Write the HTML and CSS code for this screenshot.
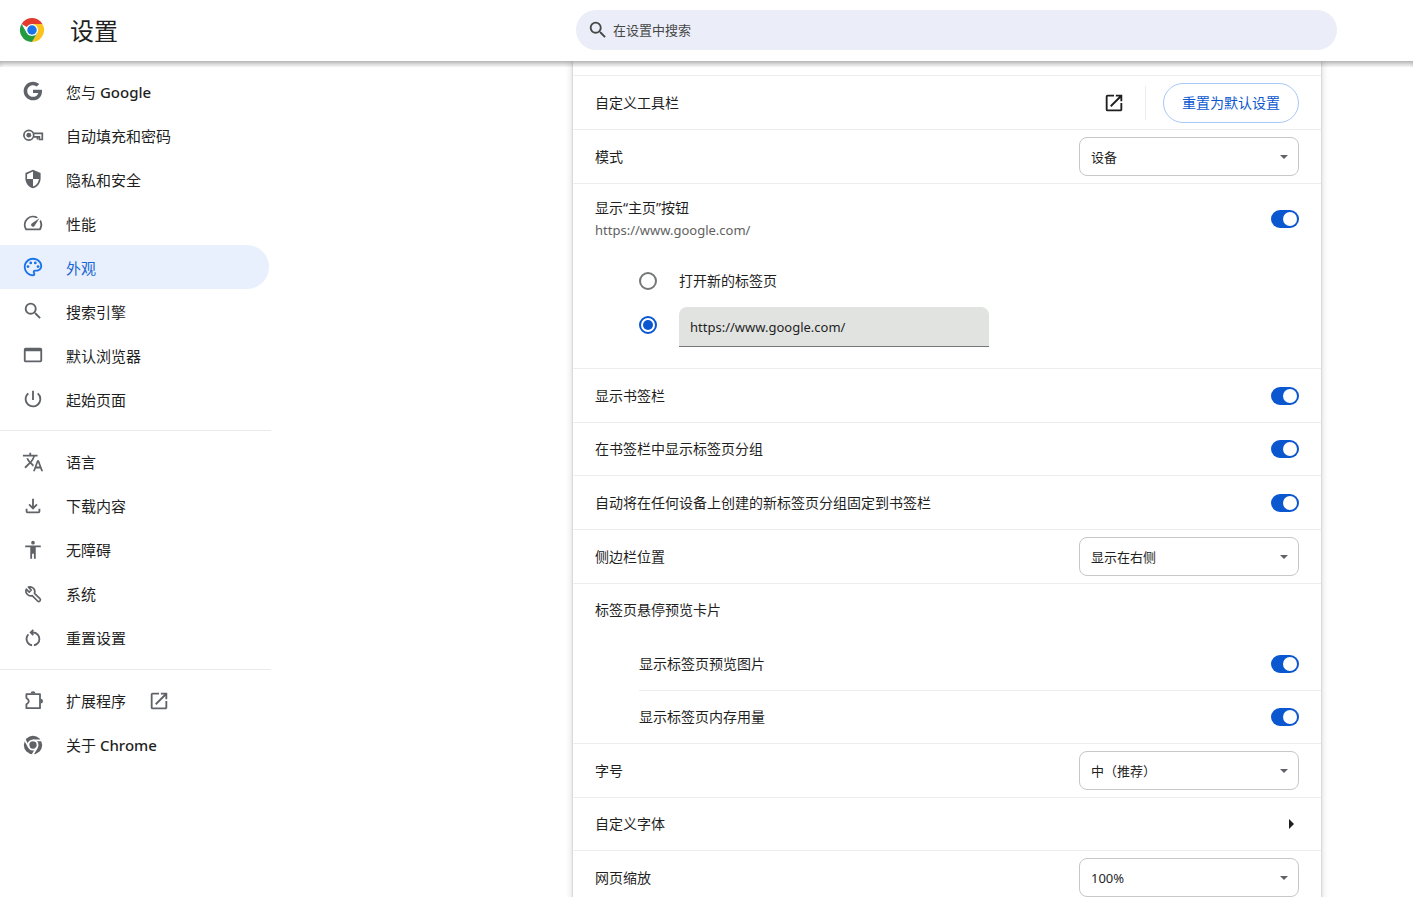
FILE: index.html
```html
<!DOCTYPE html>
<html lang="zh-CN">
<head>
<meta charset="utf-8">
<title>设置</title>
<link rel="stylesheet" href="styles.css">
</head>
<body>
<header class="toolbar">
  <div class="brand">
    <svg class="brand-logo" viewBox="0 0 48 48" aria-hidden="true">
      <path fill="#e33b2e" d="M24 24 3.2 12A24 24 0 0 1 44.8 12H24z"/>
      <path fill="#fcc31e" d="M44.8 12A24 24 0 0 1 24 48L34.4 30 24 12z"/>
      <path fill="#249a41" d="M3.2 12A24 24 0 0 0 24 48L34.4 30H24L13.6 30z"/>
      <circle cx="24" cy="24" r="12" fill="#fff"/>
      <circle cx="24" cy="24" r="9.5" fill="#1a73e8"/>
    </svg>
    <h1 class="brand-title">设置</h1>
  </div>
  <label class="search">
    <svg class="search-icon" viewBox="0 0 24 24" aria-hidden="true"><path d="M15.5 14h-.79l-.28-.27A6.47 6.47 0 0 0 16 9.5 6.5 6.5 0 1 0 9.5 16c1.61 0 3.09-.59 4.23-1.57l.27.28v.79l5 4.99L20.49 19l-4.99-5zm-6 0a4.5 4.5 0 1 1 0-9 4.5 4.5 0 0 1 0 9z"/></svg>
    <input class="search-input" type="search" placeholder="在设置中搜索" aria-label="在设置中搜索">
  </label>
</header>

<div class="page">
  <nav class="sidebar">
    <a class="nav-item" href="#people"><svg class="icon" viewBox="-.4 -.4 18.8 18.8"><path d="M16.58 8H9v2.75h4.47c-.24 1.2-1.42 3.27-4.47 3.27-2.72 0-4.93-2.25-4.93-5.02S6.28 3.98 9 3.98c1.54 0 2.57.66 3.17 1.22l2.19-2.12C12.97 1.79 11.16 1 9 1 4.58 1 1 4.58 1 9s3.58 8 8 8c4.62 0 7.68-3.25 7.68-7.82 0-.46-.04-.83-.1-1.18z"/></svg><span class="nav-text">您与 <span class="latin">Google</span></span></a>
    <a class="nav-item" href="#autofill"><svg class="icon" viewBox="0 0 22 22"><g fill="none" stroke="currentColor" stroke-width="1.7"><circle cx="6.8" cy="11.2" r="4.9"/><path d="M11.4 9.3h8.9v6.2h-2.9v-2.6h-6"/></g><circle cx="6.8" cy="11.2" r="2.4"/><path d="M14.6 12.5h1.6v3h-1.6z"/></svg><span class="nav-text">自动填充和密码</span></a>
    <a class="nav-item" href="#privacy"><svg class="icon" viewBox="-1 -1 26 26"><path d="M12 1L3 5v6c0 5.55 3.84 10.74 9 12 5.16-1.26 9-6.45 9-12V5l-9-4zm0 10.99h7c-.53 4.12-3.28 7.79-7 8.94V12H5V6.3l7-3.11v8.8z"/></svg><span class="nav-text">隐私和安全</span></a>
    <a class="nav-item" href="#performance"><svg class="icon" viewBox="0 0 24 24"><path d="m20.38 8.57-1.23 1.85a8 8 0 0 1-.22 7.58H5.07A8 8 0 0 1 15.58 6.85l1.85-1.23A10 10 0 0 0 3.35 19a2 2 0 0 0 1.72 1h13.85a2 2 0 0 0 1.74-1 10 10 0 0 0-.27-10.44zm-9.79 6.84a2 2 0 0 0 2.83 0l5.66-8.49-8.49 5.66a2 2 0 0 0 0 2.83z"/></svg><span class="nav-text">性能</span></a>
    <a class="nav-item nav-item-active" href="#appearance" aria-current="page"><svg class="icon" viewBox="0 0 24 24"><path d="M12 22C6.49 22 2 17.51 2 12S6.49 2 12 2s10 4.04 10 9c0 3.31-2.69 6-6 6h-1.77c-.28 0-.5.22-.5.5 0 .12.05.23.13.33.41.47.64 1.06.64 1.67A2.5 2.5 0 0 1 12 22zm0-18c-4.41 0-8 3.59-8 8s3.59 8 8 8c.28 0 .5-.22.5-.5a.54.54 0 0 0-.14-.35c-.41-.46-.63-1.05-.63-1.65a2.5 2.5 0 0 1 2.5-2.5H16c2.21 0 4-1.79 4-4 0-3.86-3.59-7-8-7z"/><circle cx="6.5" cy="11.5" r="1.5"/><circle cx="9.5" cy="7.5" r="1.5"/><circle cx="14.5" cy="7.5" r="1.5"/><circle cx="17.5" cy="11.5" r="1.5"/></svg><span class="nav-text">外观</span></a>
    <a class="nav-item" href="#search"><svg class="icon" viewBox="0 0 24 24"><path d="M15.5 14h-.79l-.28-.27A6.47 6.47 0 0 0 16 9.5 6.5 6.5 0 1 0 9.5 16c1.61 0 3.09-.59 4.23-1.57l.27.28v.79l5 4.99L20.49 19l-4.99-5zm-6 0a4.5 4.5 0 1 1 0-9 4.5 4.5 0 0 1 0 9z"/></svg><span class="nav-text">搜索引擎</span></a>
    <a class="nav-item" href="#browser"><svg class="icon" viewBox="0 0 24 24"><path d="M20 4H4a2 2 0 0 0-2 2v12c0 1.1.9 2 2 2h16a2 2 0 0 0 2-2V6a2 2 0 0 0-2-2zm0 14H4V8h16v10z"/></svg><span class="nav-text">默认浏览器</span></a>
    <a class="nav-item" href="#startup"><svg class="icon" viewBox="0 0 24 24"><path d="M13 3h-2v10h2V3zm4.83 2.17-1.42 1.42A6.92 6.92 0 0 1 19 12a7 7 0 1 1-11.42-5.42L6.17 5.17A9 9 0 1 0 21 12a8.94 8.94 0 0 0-3.17-6.83z"/></svg><span class="nav-text">起始页面</span></a>
    <hr class="nav-rule">
    <a class="nav-item" href="#languages"><svg class="icon" viewBox="0 0 24 24"><path d="m12.87 15.07-2.54-2.51.03-.03A17.52 17.52 0 0 0 14.07 6H17V4h-7V2H8v2H1v1.99h11.17C11.5 7.92 10.44 9.75 9 11.35 8.07 10.32 7.3 9.19 6.69 8h-2c.73 1.63 1.73 3.17 2.98 4.56l-5.09 5.02L4 19l5-5 3.11 3.11.76-2.04zM18.5 10h-2L12 22h2l1.12-3h4.75L21 22h2l-4.5-12zm-2.62 7 1.62-4.33L19.12 17h-3.24z"/></svg><span class="nav-label">语言</span></a>
    <a class="nav-item" href="#downloads"><svg class="icon" viewBox="0 0 24 24"><path d="m12 16-5-5 1.4-1.45 2.6 2.6V4h2v8.15l2.6-2.6L17 11zm-6 4a2 2 0 0 1-2-2v-3h2v3h12v-3h2v3a2 2 0 0 1-2 2z"/></svg><span class="nav-label">下载内容</span></a>
    <a class="nav-item" href="#accessibility"><svg class="icon" viewBox="0 0 24 24"><path d="M12 2a2 2 0 1 1 0 4 2 2 0 0 1 0-4zm8.500 7H15v12.500h-2V16h-2v5.500H9V9H3.500V7h17v2z"/></svg><span class="nav-label">无障碍</span></a>
    <a class="nav-item" href="#system"><svg class="icon" viewBox="0 0 22 22"><path fill="none" stroke="currentColor" stroke-width="1.700" stroke-linejoin="round" d="M4.300 6.200 7.200 9.100 9.300 7 6.400 4.100A4.800 4.800 0 0 1 12.500 10.300L17.900 15.700A1.600 1.600 0 0 1 15.600 18L10.200 12.600A4.800 4.800 0 0 1 4.300 6.200Z"/></svg><span class="nav-label">系统</span></a>
    <a class="nav-item" href="#reset"><svg class="icon" viewBox="0 0 24 24"><path d="M6 13c0-1.65.67-3.15 1.76-4.24L6.34 7.34A8 8 0 0 0 11 20.93v-2.02c-2.83-.48-5-2.94-5-5.91zm14 0a8 8 0 0 0-8-8h-.06l1.09-1.09L11.62 2.5 8.12 6l3.5 3.5 1.41-1.41L11.94 7H12a6 6 0 0 1 1 11.91v2.02A8 8 0 0 0 20 13z"/></svg><span class="nav-label">重置设置</span></a>
    <hr class="nav-rule">
    <a class="nav-item" href="#extensions"><svg class="icon" viewBox="0 0 22 22"><path fill="none" stroke="currentColor" stroke-width="1.800" stroke-linejoin="round" d="M4.400 4.200H18V18.200H4.400V14.400Q6.800 13 6.800 11.200T4.400 8Z"/><path d="M8.600 3.600a2.400 2.400 0 0 1 4.800 0zM18.600 8.800a2.400 2.400 0 0 1 0 4.800z"/></svg><span class="nav-label">扩展程序</span><svg class="icon" viewBox="0 0 24 24"><path d="M19 19H5V5h7V3H5a2 2 0 0 0-2 2v14a2 2 0 0 0 2 2h14c1.1 0 2-.9 2-2v-7h-2v7zM14 3v2h3.59l-9.83 9.83 1.41 1.41L19 6.41V10h2V3h-7z"/></svg></a>
    <a class="nav-item" href="#about"><svg class="icon" viewBox="0 0 24 24"><circle cx="12" cy="12" r="10"/><g fill="none" stroke="#fff" stroke-width="2"><circle cx="12" cy="12" r="5"/><path d="M12 7h10M7.700 14.500l-5-8.660M16.300 14.500l-5 8.660"/></g></svg><span class="nav-label">关于 <span class="latin">Chrome</span></span></a>
  </nav>

  <main class="card">
    <section class="row">
      <span class="row-label">自定义工具栏</span>
      <div class="actions">
        <button class="icon-button" type="button" aria-label="自定义工具栏"><svg class="icon-dark" viewBox="0 0 24 24"><path d="M19 19H5V5h7V3H5a2 2 0 0 0-2 2v14a2 2 0 0 0 2 2h14c1.1 0 2-.9 2-2v-7h-2v7zM14 3v2h3.59l-9.83 9.83 1.41 1.41L19 6.41V10h2V3h-7z"/></svg></button>
        <button class="reset-button" type="button">重置为默认设置</button>
      </div>
    </section>
    <section class="row">
      <label class="row-label" for="mode">模式</label>
      <span class="select-wrap"><select class="select" id="mode"><option>设备</option></select></span>
    </section>
    <section class="row row-tall">
      <label class="row-label" for="home">显示“主页”按钮<span class="row-sub">https://www.google.com/</span></label>
      <input class="toggle" id="home" type="checkbox" role="switch" checked>
    </section>
    <div class="radio-group">
      <label class="radio-row"><input class="radio" type="radio" name="home-page">打开新的标签页</label>
      <div class="radio-row">
        <input class="radio" type="radio" name="home-page" aria-label="https://www.google.com/" checked>
        <input class="url-input" type="text" value="https://www.google.com/" aria-label="主页网址">
      </div>
    </div>
    <section class="row">
      <label class="row-label" for="bookmarks">显示书签栏</label>
      <input class="toggle" id="bookmarks" type="checkbox" role="switch" checked>
    </section>
    <section class="row row-compact">
      <label class="row-label" for="groups">在书签栏中显示标签页分组</label>
      <input class="toggle" id="groups" type="checkbox" role="switch" checked>
    </section>
    <section class="row">
      <label class="row-label" for="pin">自动将在任何设备上创建的新标签页分组固定到书签栏</label>
      <input class="toggle" id="pin" type="checkbox" role="switch" checked>
    </section>
    <section class="row">
      <label class="row-label" for="side">侧边栏位置</label>
      <span class="select-wrap"><select class="select" id="side"><option>显示在右侧</option></select></span>
    </section>
    <section class="row row-compact">
      <span class="row-label">标签页悬停预览卡片</span>
    </section>
    <div class="sub-rows">
      <section class="row">
        <label class="row-label" for="preview">显示标签页预览图片</label>
        <input class="toggle" id="preview" type="checkbox" role="switch" checked>
      </section>
      <section class="row row-compact">
        <label class="row-label" for="memory">显示标签页内存用量</label>
        <input class="toggle" id="memory" type="checkbox" role="switch" checked>
      </section>
    </div>
    <section class="row">
      <label class="row-label" for="size">字号</label>
      <span class="select-wrap"><select class="select" id="size"><option>中（推荐）</option></select></span>
    </section>
    <section class="row row-compact">
      <span class="row-label">自定义字体</span>
      <button class="arrow-button" type="button" aria-label="自定义字体"></button>
    </section>
    <section class="row">
      <label class="row-label" for="zoom">网页缩放</label>
      <span class="select-wrap"><select class="select" id="zoom"><option>100%</option></select></span>
    </section>
  </main>
</div>
</body>
</html>
```
FILE: styles.css
```css
* {
  box-sizing: border-box;
}

body {
  margin: 0;
  height: 100vh;
  display: flex;
  flex-direction: column;
  overflow: hidden;
  background: #fff;
  color: #1f1f1f;
  font: 14px/20px "Noto Sans", "Noto Sans CJK SC", sans-serif;
}

button,
input,
select {
  margin: 0;
  font: inherit;
  color: inherit;
}

/* Toolbar */
.toolbar {
  position: relative;
  z-index: 1;
  flex: none;
  display: grid;
  grid-template-columns: minmax(200px, 576fr) minmax(0, 761px) 76fr;
  align-items: center;
  padding: 10px 0 11px;
  background: #fff;
}

.toolbar::after {
  content: "";
  position: absolute;
  top: 100%;
  left: 0;
  right: 0;
  height: 6px;
  box-shadow: inset 0 5px 6px -3px rgba(0, 0, 0, 0.4);
  pointer-events: none;
}

.brand {
  display: flex;
  align-items: center;
  gap: 26px;
  padding-left: 20px;
}

.brand-logo {
  width: 24px;
  height: 24px;
}

.brand-title {
  margin: 0;
  padding-top: 2px;
  font-size: 24px;
  line-height: 32px;
  font-weight: 400;
}

.search {
  display: flex;
  align-items: center;
  gap: 4px;
  height: 40px;
  padding: 0 11px;
  border-radius: 20px;
  background: #ebeef8;
}

.search-icon {
  flex: none;
  width: 22px;
  height: 22px;
  fill: #474747;
}

.search-input {
  flex: 1;
  min-width: 0;
  padding: 0;
  border: 0;
  outline: 0;
  background: none;
  font-size: 13px;
}

.search-input::placeholder {
  color: #474747;
  opacity: 1;
}

/* Page columns */
.page {
  flex: 1;
  min-height: 0;
  overflow: hidden;
  display: grid;
  grid-template-columns: minmax(293px, 573fr) minmax(0, 748px) 92fr;
}

/* Sidebar */
.sidebar {
  width: 271px;
  padding-top: 8px;
}

.nav-item {
  display: flex;
  align-items: center;
  gap: 22px;
  height: 44px;
  margin-right: 2px;
  padding-left: 22px;
  border-radius: 0 22px 22px 0;
  color: #1f1f1f;
  font-size: 15px;
  text-decoration: none;
}

.nav-text {
  padding-top: 1px;
}

.latin {
  font-weight: 500;
}

.nav-item-active {
  background: #e8f0fe;
  color: #1967d2;
}

.nav-rule {
  margin: 9px 0;
  border: 0;
  border-top: 1px solid #e8eaed;
}

.icon {
  flex: none;
  width: 22px;
  height: 22px;
  color: #5f6368;
  fill: currentColor;
}

.nav-item-active .icon {
  color: #1a73e8;
}

/* Settings card */
.card {
  align-self: start;
  padding: 14px 0 22px;
  background: #fff;
  box-shadow: 0 1px 2px 0 rgba(60, 64, 67, 0.3), 0 2px 6px 2px rgba(60, 64, 67, 0.15);
}

.row {
  display: flex;
  align-items: center;
  gap: 16px;
  min-height: 54px;
  padding: 0 22px;
  border-top: 1px solid #ededed;
}

.row-compact {
  min-height: 53px;
}

.row-tall {
  min-height: 70px;
}

.row-label {
  flex: 1;
}

.row-sub {
  display: block;
  margin-top: 2px;
  color: #5f5f5f;
  font-size: 13px;
}

.sub-rows {
  padding-left: 66px;
}

.sub-rows .row {
  padding-left: 0;
}

.sub-rows .row:first-child {
  border-top-color: transparent;
}

.actions {
  display: flex;
  align-items: center;
}

.icon-button {
  display: flex;
  padding: 6px 20px;
  border: 0;
  border-right: 1px solid #ededed;
  background: none;
}

.icon-dark {
  width: 22px;
  height: 22px;
  fill: #1f1f1f;
}

.reset-button {
  height: 40px;
  margin-left: 17px;
  padding: 0 18px;
  border: 1px solid #a8c7fa;
  border-radius: 20px;
  background: #fff;
  color: #0b57d0;
}

.select-wrap {
  position: relative;
  display: flex;
  width: 220px;
}

.select-wrap::after {
  content: "";
  position: absolute;
  top: 18px;
  right: 11px;
  border: 4px solid transparent;
  border-top-color: #5f6368;
  border-bottom: 0;
  pointer-events: none;
}

.select {
  width: 100%;
  height: 39px;
  padding: 0 28px 0 11px;
  appearance: none;
  border: 1px solid #c7c7c7;
  border-radius: 8px;
  background: #fff;
  font-size: 13px;
}

.toggle {
  appearance: none;
  width: 28px;
  height: 18px;
  border-radius: 9px;
  background: #c7c7c7;
}

.toggle::before {
  content: "";
  display: block;
  width: 14px;
  height: 14px;
  margin: 2px;
  border-radius: 50%;
  background: #fff;
}

.toggle:checked {
  background: #0b57d0;
}

.toggle:checked::before {
  margin-left: 12px;
}

/* Home page choices */
.radio-group {
  padding: 6px 22px 21px 66px;
}

.radio-row {
  display: flex;
  align-items: center;
  gap: 22px;
  height: 44px;
}

.radio {
  appearance: none;
  display: grid;
  place-items: center;
  width: 18px;
  height: 18px;
  border: 2px solid #747775;
  border-radius: 50%;
}

.radio:checked {
  border-color: #0b57d0;
}

.radio:checked::before {
  content: "";
  width: 10px;
  height: 10px;
  border-radius: 50%;
  background: #0b57d0;
}

.url-input {
  align-self: flex-end;
  width: 310px;
  height: 40px;
  padding: 0 11px;
  border: 0;
  border-bottom: 1px solid #747775;
  border-radius: 8px 8px 0 0;
  background: #e1e3e1;
  font-size: 13px;
}

.arrow-button {
  width: 16px;
  height: 20px;
  padding: 0 5px 0 6px;
  border: 0;
  background: none;
}

.arrow-button::before {
  content: "";
  display: block;
  width: 0;
  border: 5px solid transparent;
  border-left-color: #1f1f1f;
  border-right: 0;
}
```
